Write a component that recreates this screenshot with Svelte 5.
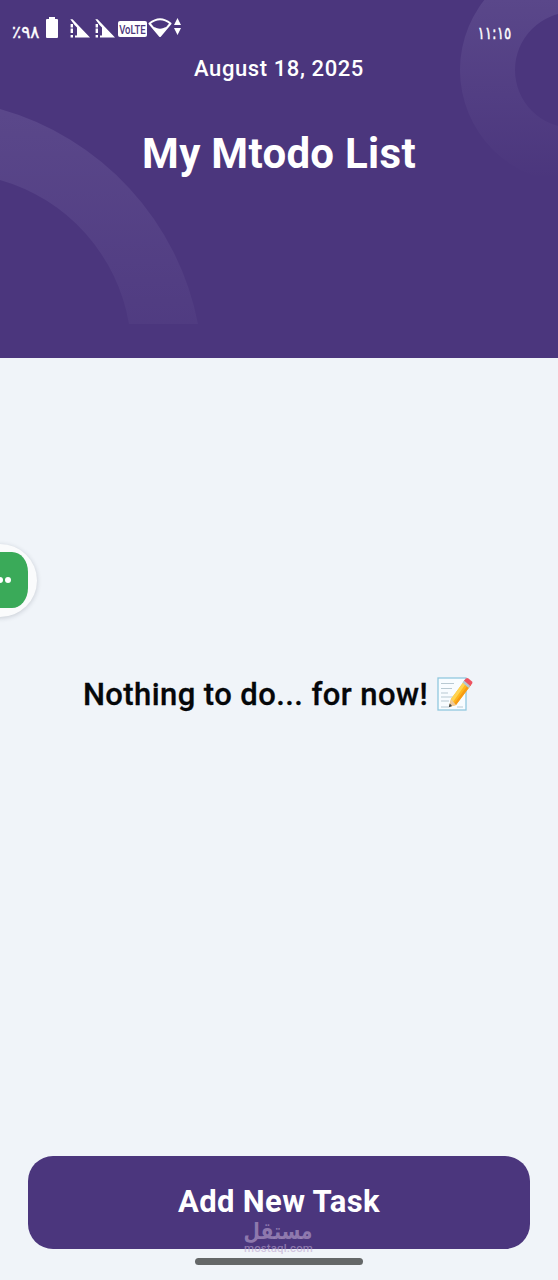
<script lang="ts">
  let { date = 'August 18, 2025', tasks = [] }: { date?: string; tasks?: string[] } = $props();
</script>

<div class="screen">
  <header>
    <svg class="rings" viewBox="0 0 558 358" aria-hidden="true">
      <defs>
        <linearGradient id="ring-left" gradientUnits="userSpaceOnUse" x1="0" y1="100" x2="0" y2="350">
          <stop offset="0" stop-color="#e0e0ff" stop-opacity="0.105" />
          <stop offset="1" stop-color="#e0e0ff" stop-opacity="0.025" />
        </linearGradient>
        <linearGradient id="ring-right" gradientUnits="userSpaceOnUse" x1="0" y1="0" x2="0" y2="180">
          <stop offset="0" stop-color="#e0e0ff" stop-opacity="0.1" />
          <stop offset="1" stop-color="#e0e0ff" stop-opacity="0" />
        </linearGradient>
      </defs>
      <path d="M0 109A278 278 0 0 1 198 324H129A181 181 0 0 0 0 180Z" fill="url(#ring-left)" />
      <path
        d="M460 70a113 113 0 1 0 226 0a113 113 0 1 0-226 0ZM515 70a58 58 0 1 1 116 0a58 58 0 1 1-116 0Z"
        fill="url(#ring-right)"
        fill-rule="evenodd"
      />
    </svg>

    <div class="status">
      <bdo class="battery-level" dir="ltr">٪٩٨</bdo>
      <svg class="battery" viewBox="0 0 12 21"><path d="M3 0h6v2h2q1 0 1 1v17q0 1-1 1H1q-1 0-1-1V3q0-1 1-1h2Z" fill="#fff" /></svg>
      {#each ['sim1', 'sim2'] as sim (sim)}
        <svg class="signal" viewBox="0 0 20 20" fill="#fff">
          <path d="M0.3 0.3H2.5L20 18.5H5V16.5H7V8.5L4.5 6Z" />
          <path d="M0.6 5h2.4v3.5H0.6ZM0.6 9.5h2.4v4.5H0.6ZM0.6 16h2.4v2.5H0.6Z" />
        </svg>
      {/each}
      <span class="volte"><span>VoLTE</span></span>
      <svg class="wifi" viewBox="0 0 24 20">
        <path d="M1.5 5.5Q12-3 22.5 5.5L12 18Z" fill="none" stroke="#fff" stroke-width="2" stroke-linejoin="round" />
        <path d="M4.8 9.5Q7 8.8 8.5 10Q12 11.5 15.5 10Q17 8.8 19.2 9.5L12 18.5Z" fill="#fff" />
      </svg>
      <svg class="traffic" viewBox="0 0 7 17" fill="#fff"><path d="M3.5 0L7 7H0ZM0 10h7L3.5 17Z" /></svg>
      <bdo class="clock" dir="ltr">١١:١٥</bdo>
    </div>

    <p class="date">{date}</p>
    <h1>My Mtodo List</h1>
  </header>

  <main>
    {#if tasks.length === 0}
      <p class="empty">
        <span>Nothing to do... for now!</span>
        <svg class="memo" viewBox="0 0 36 36" role="img" aria-label="memo">
          <rect x="1" y="2" width="28" height="32" fill="#f8fcff" stroke="#91c8df" stroke-width="1.3" />
          <path
            d="M4 7.5h13M4 12.5h11M4 17h7M4 21h13M4 25h8M4 31h7M20 31h6"
            stroke="#b8c9d2"
            stroke-width="1"
            fill="none"
          />
          <path d="M28 4L34 9L19 29L12 31L14 23Z" fill="#ffb61b" />
          <path d="M28 4L30 6L16 26L14 23Z" fill="#ffd453" />
          <path d="M32 7.5L34 9L19 29L17 28Z" fill="#f79b13" />
          <path d="M14 23L19 29L12 31Z" fill="#edc99b" />
          <path d="M12.8 27.5L15 30.1L11.5 31.5Z" fill="#424a50" />
          <path d="M25.5 6.5L27.5 4L33.5 9.5L31.5 12Z" fill="#b3c8d1" />
          <path d="M27 4.5L29 2.5Q30 1.5 31.5 2.5L35 5.4Q36 6.5 35 7.8L33.3 10Z" fill="#ed5261" />
        </svg>
      </p>
    {:else}
      {#each tasks as task (task)}
        <p>{task}</p>
      {/each}
    {/if}
  </main>

  <footer>
    <button type="button">Add New Task</button>
    <div class="home-bar"></div>
  </footer>

  <!-- floats above the page, half off the left edge -->
  <div class="bubble"><div class="bubble-face"><i></i><i></i></div></div>

  <div class="watermark">
    <span class="mark-ar" lang="ar">مستقل</span>
    <span class="mark-en">mostaql.com</span>
  </div>
</div>

<style>
  :global(body) {
    margin: 0;
  }

  .screen {
    position: relative;
    display: flex;
    flex-direction: column;
    width: 558px;
    height: 1280px;
    overflow: hidden;
    background: #f0f4f9;
    color: #050709;
    font-family: Roboto, 'Noto Sans', sans-serif;
  }

  header {
    position: relative;
    height: 358px;
    flex: none;
    background: #4b367d;
    color: #fff;
    text-align: center;
  }

  .rings {
    position: absolute;
    inset: 0;
    width: 558px;
    height: 358px;
  }

  .status {
    position: relative;
    display: flex;
    align-items: flex-start;
    height: 55px;
    padding: 0 47px 0 12px;
    box-sizing: border-box;
  }

  .battery-level,
  .clock {
    font-family: 'DejaVu Sans', sans-serif;
    font-size: 17px;
    line-height: 20px;
    white-space: nowrap;
    -webkit-text-stroke: 0.4px #fff;
  }

  .battery-level {
    width: 34px;
    margin-top: 22px;
    text-align: left;
  }

  .battery {
    width: 12px;
    height: 21px;
    margin-top: 17px;
  }

  .signal {
    width: 20px;
    height: 20px;
    margin: 19px 0 0 12px;
  }

  .signal + .signal {
    margin-left: 5px;
  }

  .volte {
    display: flex;
    align-items: center;
    justify-content: center;
    width: 29px;
    height: 16px;
    margin: 21px 0 0 3px;
    border-radius: 2px;
    background: #fff;
    color: #4b367d;
    font-size: 12.5px;
    font-weight: 500;
  }

  .volte span {
    transform: scaleX(0.76);
  }

  .wifi {
    width: 24px;
    height: 20px;
    margin: 18px 0 0 1px;
  }

  .traffic {
    width: 7px;
    height: 17px;
    margin: 18px 0 0 2px;
  }

  .clock {
    margin: 23px 0 0 auto;
    transform: scaleX(0.8);
    transform-origin: right;
  }

  .date {
    position: relative;
    margin: 0;
    font-size: 22px;
    font-weight: 500;
    line-height: 28px;
    letter-spacing: 0.6px;
  }

  h1 {
    position: relative;
    margin: 46px 0 0;
    font-size: 42px;
    font-weight: 700;
    line-height: 50px;
    letter-spacing: 0.3px;
  }

  main {
    display: flex;
    flex: 1;
    flex-direction: column;
    padding: 315px 0 0;
  }

  .empty {
    display: flex;
    align-items: center;
    justify-content: center;
    gap: 9px;
    height: 42px;
    margin: 0;
    padding-right: 2px;
    font-size: 31px;
    font-weight: 500;
    letter-spacing: 0.42px;
    white-space: nowrap;
    -webkit-text-stroke: 0.3px #050709;
  }

  .memo {
    width: 36px;
    height: 36px;
  }

  footer {
    display: flex;
    flex-direction: column;
    align-items: center;
    height: 124px;
    flex: none;
    padding: 0 28px;
  }

  button {
    width: 502px;
    height: 93px;
    padding: 0 0 2px;
    border: 0;
    border-radius: 25px;
    background: #4b367d;
    color: #fff;
    font-family: inherit;
    font-size: 31px;
    font-weight: 700;
    letter-spacing: 0.35px;
  }

  .home-bar {
    width: 168px;
    height: 7px;
    margin-top: 9px;
    border-radius: 4px;
    background: #646768;
  }

  .bubble {
    position: absolute;
    top: 544px;
    left: -37px;
    box-sizing: border-box;
    width: 74px;
    height: 73px;
    padding: 8px 9px;
    border-radius: 50%;
    background: #fafbfc;
    box-shadow: 0 1px 5px rgb(30 40 60 / 20%);
  }

  .bubble-face {
    display: flex;
    align-items: center;
    justify-content: flex-end;
    gap: 2px;
    box-sizing: border-box;
    width: 56px;
    height: 56px;
    padding-right: 17px;
    border-radius: 16px / 20px;
    background: #3aaa59;
  }

  .bubble-face i {
    width: 6px;
    height: 6px;
    border-radius: 50%;
    background: #fff;
  }

  .watermark {
    position: absolute;
    top: 1221px;
    left: 238px;
    display: flex;
    flex-direction: column;
    align-items: center;
    width: 81px;
    color: rgb(188 166 207 / 60%);
  }

  .mark-ar {
    font-family: 'DejaVu Sans', sans-serif;
    font-size: 23px;
    font-weight: 700;
    line-height: 21px;
    transform: scaleX(0.82);
  }

  .mark-en {
    font-size: 11.5px;
    font-weight: 500;
    line-height: 13px;
    letter-spacing: 0.1px;
  }
</style>
